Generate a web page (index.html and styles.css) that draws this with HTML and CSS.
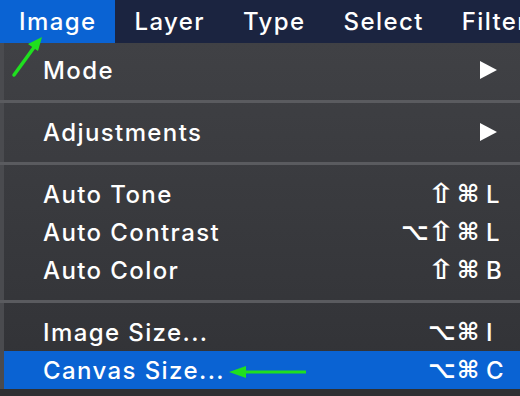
FILE: index.html
```html
<!DOCTYPE html>
<html lang="en">

<head>
    <meta charset="UTF-8">
    <title>Image menu</title>
    <link rel="stylesheet" href="styles.css">
</head>

<body>

    <!-- Barra de menus -->
    <div class="menubar">
        <span class="menubar-item active">Image</span>
        <span class="menubar-item">Layer</span>
        <span class="menubar-item">Type</span>
        <span class="menubar-item">Select</span>
        <span class="menubar-item">Filter</span>
    </div>

    <!-- Menu suspenso -->
    <div class="menu">
        <div class="item">
            <span>Mode</span>
            <svg class="submenu" width="17" height="18" viewBox="0 0 17 18"><polygon points="0,0 17,9 0,18" fill="#fff"/></svg>
        </div>
        <div class="separator"></div>
        <div class="item">
            <span>Adjustments</span>
            <svg class="submenu" width="17" height="18" viewBox="0 0 17 18"><polygon points="0,0 17,9 0,18" fill="#fff"/></svg>
        </div>
        <div class="separator"></div>
        <div class="item">
            <span>Auto Tone</span>
            <span class="keys"><i class="shift">⇧</i><i>⌘</i><b>L</b></span>
        </div>
        <div class="item">
            <span>Auto Contrast</span>
            <span class="keys"><i class="opt">⌥</i><i class="shift">⇧</i><i>⌘</i><b>L</b></span>
        </div>
        <div class="item">
            <span>Auto Color</span>
            <span class="keys"><i class="shift">⇧</i><i>⌘</i><b>B</b></span>
        </div>
        <div class="separator"></div>
        <div class="item">
            <span>Image Size...</span>
            <span class="keys"><i class="opt">⌥</i><i>⌘</i><b>I</b></span>
        </div>
        <div class="item selected">
            <span>Canvas Size...</span>
            <span class="keys"><i class="opt">⌥</i><i>⌘</i><b>C</b></span>
        </div>
    </div>

    <!-- Setas verdes de anotação -->
    <svg class="arrows" width="520" height="396" viewBox="0 0 520 396">
        <line x1="14" y1="75" x2="35" y2="46" stroke="#1fe01f" stroke-width="3.5" stroke-linecap="round"/>
        <polygon points="42,37 28,44 38,51" fill="#1fe01f"/>
        <line x1="306" y1="372" x2="240" y2="372" stroke="#1fe01f" stroke-width="3"/>
        <polygon points="229,372 246,366 246,378" fill="#1fe01f"/>
    </svg>

</body>

</html>
```

FILE: styles.css
```css
body {
    margin: 0;
    width: 520px;
    height: 396px;
    overflow: hidden;
    background-color: #2f3033;
    font-family: Inter, "Liberation Sans", sans-serif;
    font-weight: 500;
    letter-spacing: 1.4px;
    color: #fff;
    position: relative;
}

.menubar {
    height: 43px;
    background-color: #1b2440;
    display: flex;
    align-items: center;
    font-size: 24px;
}

.menubar-item {
    height: 43px;
    line-height: 43px;
    padding: 0 19px;
}

.menubar-item.active {
    background-color: #0a63d3;
}

.menu {
    border-left: 4px solid #4a4b4f;
    padding-top: 8px;
    background: linear-gradient(#404145, #313236);
    font-size: 24px;
}

.item {
    height: 38px;
    display: flex;
    align-items: center;
    justify-content: space-between;
    padding: 0 19px 0 39px;
}

.item.selected {
    background-color: #0a63d3;
}

.separator {
    height: 3px;
    margin: 11px 0 10px -4px;
    background-color: #5a5b5f;
}

.submenu {
    margin-right: 4px;
}

.keys {
    display: flex;
    align-items: center;
    gap: 5px;
    font-family: "DejaVu Sans", sans-serif;
    font-weight: bold;
    letter-spacing: 0;
}

.keys i {
    font-style: normal;
    display: inline-block;
    width: 22px;
    text-align: center;
}

.keys i.opt {
    width: 24px;
}

.keys i.shift {
    transform: scale(1.35, 1.15);
}

.keys b {
    font-family: Inter, sans-serif;
    font-weight: 500;
    width: 17px;
    padding-left: 2px;
    box-sizing: border-box;
}

.arrows {
    position: absolute;
    left: 0;
    top: 0;
}
```
